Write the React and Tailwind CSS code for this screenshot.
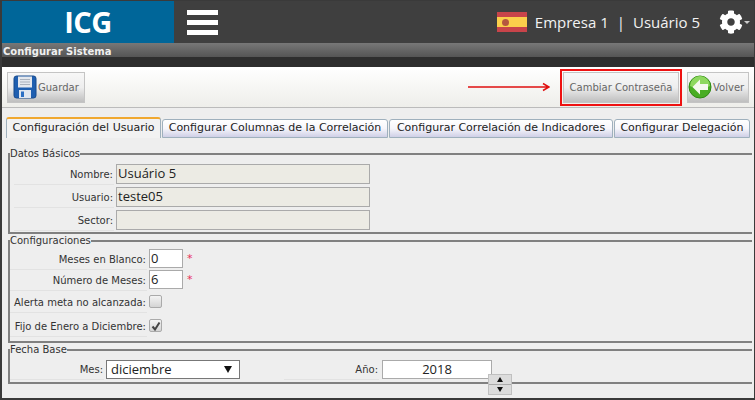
import React from "react";
import { FaCog } from "react-icons/fa";

const font = { fontFamily: '"DejaVu Sans", Verdana, sans-serif' };
const openSans = { fontFamily: '"Open Sans", sans-serif' };

function SaveIcon() {
    return (
        <svg width="24" height="24" viewBox="0 0 24 24">
            <rect x="1" y="1" width="22" height="22" rx="2.5" fill="#1f5fb0" stroke="#174a8c" />
            <rect x="5" y="1.5" width="14" height="11" fill="#e4e8ee" />
            <path d="M7 4.5h10M7 7h10M7 9.5h10" stroke="#aab2bd" strokeWidth="1" />
            <rect x="6" y="15" width="12" height="8" fill="#dfe6f0" />
            <rect x="8" y="16.5" width="3" height="5.5" fill="#2a6fc4" />
        </svg>
    );
}

function BackIcon() {
    return (
        <svg width="24" height="24" viewBox="0 0 24 24">
            <circle cx="12" cy="12" r="11" fill="#49ad24" stroke="#2f8a14" />
            <path d="M2 11a10 10 0 0 1 20 0c-4 2-16 2-20 0z" fill="#8ed85f" />
            <path d="M12 4.5L4.5 12l7.5 7.5v-4.5h8v-6h-8z" fill="#f4f8ee" />
        </svg>
    );
}

function SpainFlag() {
    return (
        <div className="flex h-5 w-[30px] flex-col">
            <div className="h-[5px] bg-[#c8444a]" />
            <div className="flex h-[10px] items-center bg-[#fbcf4b] pl-[5px]">
                <div className="h-[7px] w-[7px] rounded-sm bg-[#b5563f]" />
            </div>
            <div className="h-[5px] bg-[#c8444a]" />
        </div>
    );
}

function ToolButton({ icon, label, className }) {
    return (
        <button
            className={
                "flex h-[31px] items-center gap-[1px] border border-[#c4c4c4] bg-gradient-to-b from-[#f7f7f7] via-[#eeeeee] to-[#bfbfbf] text-[10px] text-[#666] " +
                className
            }
        >
            {icon}
            {label}
        </button>
    );
}

function Tab({ label, active, className }) {
    if (active) {
        return (
            <div className={"flex h-[21px] items-center justify-center rounded-t-[3px] border border-b-0 border-[#9fb0bd] border-t-[#f0a830] border-t-2 bg-[#f2f2f2] text-[11px] text-[#222] " + className}>
                {label}
            </div>
        );
    }
    return (
        <div className={"flex h-[19px] items-center justify-center rounded-t-[3px] border border-[#9fb0bd] bg-gradient-to-b from-[#ffffff] via-[#f6f6fb] to-[#cfcfe6] text-[11px] text-[#222] " + className}>
            {label}
        </div>
    );
}

function Label({ children, className }) {
    return (
        <div className={"border-b border-[#e2e2e2] pb-[2px] text-right text-[10px] leading-[15px] text-[#333] " + className}>
            {children}
        </div>
    );
}

function Field({ label, value }) {
    return (
        <div className="flex h-[23px] items-start">
            <Label className="mt-[3px] ml-[4px] w-[100px] pr-[1px]">{label}</Label>
            <div className="ml-[2px] flex h-[20px] w-[254px] items-center border border-[#aaa] bg-[#ecebe4] pl-[1px] text-[13px] text-[#222]" style={openSans}>
                {value}
            </div>
        </div>
    );
}

function NumberField({ label, value, className }) {
    return (
        <div className={"flex items-start " + className}>
            <Label className="mt-[3px] w-[137px] pr-[1px]">{label}</Label>
            <div className="ml-[2px] flex h-[19px] w-[34px] items-center border border-[#aaa] bg-white pl-[1px] text-[13px] text-[#222]" style={openSans}>
                {value}
            </div>
            <span className="ml-[4px] mt-[2px] text-[11px] text-[#e8305a]">*</span>
        </div>
    );
}

function CheckRow({ label, checked, className }) {
    return (
        <div className={"flex items-start " + className}>
            <Label className="w-[137px] pr-[1px]">{label}</Label>
            <div className="ml-[2px] flex h-[13px] w-[13px] items-center justify-center rounded-[2px] border border-[#aaa] bg-gradient-to-b from-[#f4f4f4] to-[#d4d4d4]">
                {checked && (
                    <svg width="10" height="10" viewBox="0 0 10 10">
                        <path d="M1.5 5.5L4 8.5 8.5 1.5" fill="none" stroke="#444" strokeWidth="2" />
                    </svg>
                )}
            </div>
        </div>
    );
}

export default function App() {
    return (
        <div className="h-[400px] w-[755px] overflow-hidden border-l-2 border-r border-t border-b-2 border-[#3a3a3a] bg-[#eeeeee]" style={font}>
            <div className="flex h-[42px] items-center bg-[#3f3f3f]">
                <div className="flex h-full w-[172px] items-center justify-center text-[29px] font-bold tracking-[-0.5px] text-white bg-[#006699]" style={openSans}>
                    ICG
                </div>
                <div className="ml-[13px] flex w-[31px] flex-col gap-[5px]">
                    <div className="h-[5px] bg-white" />
                    <div className="h-[5px] bg-white" />
                    <div className="h-[5px] bg-white" />
                </div>
                <div className="ml-auto flex items-center pr-[4px]">
                    <SpainFlag />
                    <span className="ml-[8px] text-[15px] text-[#f2f2f2]" style={openSans}>
                        Empresa 1
                    </span>
                    <span className="mx-[8px] text-[15px] text-[#f2f2f2]" style={openSans}>|</span>
                    <span className="text-[15px] text-[#f2f2f2]" style={openSans}>
                        Usuário 5
                    </span>
                    <FaCog className="ml-[19px] text-white" size={24} />
                    <div className="ml-[1px] h-0 w-0 border-x-[3px] border-t-[3px] border-x-transparent border-t-[#ccc]" />
                </div>
            </div>

            <div className="flex h-[24px] flex-col bg-[#2e2e2e]">
                <div className="h-[14px] bg-gradient-to-b from-[#777] to-[#555] pl-[1px] pt-[2px] text-[10px] leading-[14px] font-bold text-[#f0f0f0]">
                    Configurar Sistema
                </div>
            </div>

            <div className="flex h-[41px] items-center border-b border-[#bbb] bg-gradient-to-b from-white to-[#eeeeea] pl-[5px] pr-[5px]">
                <ToolButton icon={<SaveIcon />} label="Guardar" className="w-[78px] pl-[5px]" />
                <svg className="ml-auto" width="82" height="10" viewBox="0 0 82 10">
                    <path d="M0 5h80M75 1.5l6 3.5-6 3.5" fill="none" stroke="#e01010" strokeWidth="1.5" />
                </svg>
                <div className="ml-[10px] mr-[5px] border-2 border-[#ee1111] p-[1px]">
                    <ToolButton label="Cambiar Contraseña" className="w-[116px] justify-center" />
                </div>
                <ToolButton icon={<BackIcon />} label="Volver" className="w-[62px]" />
            </div>

            <div className="flex items-end gap-[1px] pl-[4px] pt-[9px]">
                <Tab active label="Configuración del Usuario" className="w-[155px]" />
                <Tab label="Configurar Columnas de la Correlación" className="w-[226px]" />
                <Tab label="Configurar Correlación de Indicadores" className="w-[224px]" />
                <Tab label="Configurar Delegación" className="w-[136px]" />
            </div>

            <div className="pt-[10px] pl-[6px] pr-[2px]">
                <fieldset className="h-[86px] border-2 border-r-0 border-[#808080]">
                    <legend className="text-[10px] leading-[12px] text-[#333]">Datos Básicos</legend>
                    <div className="pt-[4px]">
                        <Field label="Nombre:" value="Usuário 5" />
                        <Field label="Usuario:" value="teste05" />
                        <Field label="Sector:" value="" />
                    </div>
                </fieldset>
                <fieldset className="mt-[1px] h-[108px] border-2 border-r-0 border-[#808080]">
                    <legend className="text-[10px] leading-[12px] text-[#333]">Configuraciones</legend>
                    <div className="pt-[2px]">
                        <NumberField label="Meses en Blanco:" value="0" className="h-[21px]" />
                        <NumberField label="Número de Meses:" value="6" className="h-[25px]" />
                        <CheckRow label="Alerta meta no alcanzada:" className="h-[24px]" />
                        <CheckRow checked label="Fijo de Enero a Diciembre:" className="h-[24px]" />
                    </div>
                </fieldset>
                <fieldset className="mt-[1px] h-[40px] border-2 border-r-0 border-[#808080]">
                    <legend className="text-[10px] leading-[12px] text-[#333]">Fecha Base</legend>
                    <div className="flex items-start pt-[4px]">
                        <Label className="mt-[2px] w-[94px] pr-[1px]">Mes:</Label>
                        <div className="ml-[2px] flex h-[19px] w-[134px] items-center justify-between border border-[#777] bg-white pl-[4px] pr-[7px] text-[13px] text-[#222]" style={openSans}>
                            diciembre
                            <div className="h-0 w-0 border-x-[4px] border-t-[7px] border-x-transparent border-t-[#111]" />
                        </div>
                        <Label className="mt-[2px] ml-[44px] w-[95px] pr-[1px]">Año:</Label>
                        <div className="relative ml-[3px] flex h-[19px] w-[110px] items-center justify-center border border-[#aaa] bg-white text-[13px] text-[#222]" style={openSans}>
                            2018
                            <div className="absolute top-[13px] left-[105px] flex h-[21px] w-[24px] flex-col border border-[#c0c0c0] bg-[#dcdcdc] text-[#111]">
                                <div className="flex flex-1 items-center justify-center border-b border-[#aaa]">
                                    <div className="h-0 w-0 border-x-[3px] border-b-[5px] border-x-transparent border-b-[#111]" />
                                </div>
                                <div className="flex flex-1 items-center justify-center">
                                    <div className="h-0 w-0 border-x-[3px] border-t-[5px] border-x-transparent border-t-[#111]" />
                                </div>
                            </div>
                        </div>
                    </div>
                </fieldset>
            </div>
        </div>
    );
}
